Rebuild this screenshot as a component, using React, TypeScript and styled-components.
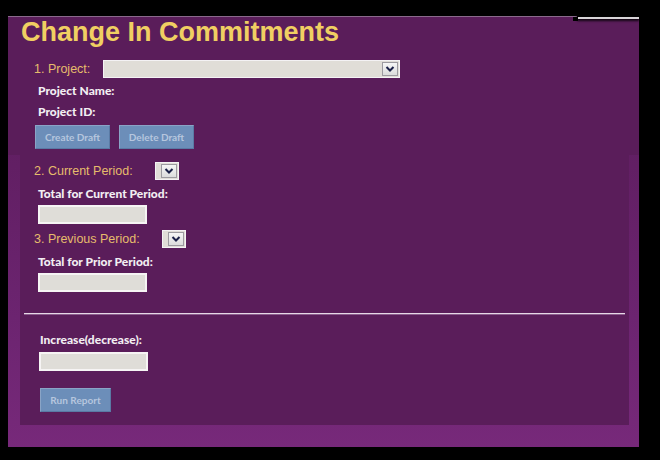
import styled, { createGlobalStyle } from "styled-components";

const GlobalStyle = createGlobalStyle`
  html, body {
    margin: 0;
    padding: 0;
    background: #000;
  }
`;

const Page = styled.div`
  width: 660px;
  height: 460px;
  box-sizing: border-box;
  padding: 16px 0 0 8px;
  background: #000;
  overflow: hidden;
`;

const Panel = styled.div`
  position: relative;
  width: 631px;
  height: 431px;
  box-sizing: border-box;
  border-top: 1px solid #8a6a8c;
  background: linear-gradient(#5c1e5c 0%, #621f64 35%, #6c2470 70%, #77297a 100%);
  display: flex;
  flex-direction: column;
`;

const CornerTab = styled.div`
  position: absolute;
  top: -17px;
  right: 0;
  width: 62px;
  height: 17px;
  background: #000;
  border-bottom: 2px solid #d8d4d8;
  box-shadow: 0 2px 2px rgba(0, 0, 0, 0.8);

  &::before {
    content: "";
    position: absolute;
    left: -4px;
    bottom: -4px;
    width: 5px;
    height: 4px;
    background: #000;
  }
`;

const Header = styled.div`
  background: #5a1d5a;
  height: 138px;
  display: flex;
  flex-direction: column;
`;

const Title = styled.h1`
  margin: 0 0 0 13px;
  font-family: "Liberation Sans", Arial, sans-serif;
  font-size: 27px;
  line-height: 30px;
  font-weight: bold;
  color: #f0cf62;
`;

const Row = styled.div<{ $top: number; $left: number }>`
  display: flex;
  align-items: center;
  height: 18px;
  margin-top: ${(p) => p.$top}px;
  padding-left: ${(p) => p.$left}px;
`;

const StepLabel = styled.span<{ $width: number }>`
  width: ${(p) => p.$width}px;
  flex: none;
  font-family: "Liberation Sans", Arial, sans-serif;
  font-size: 12.5px;
  color: #e6bc6c;
`;

const SelectBox = styled.div<{ $width: number }>`
  width: ${(p) => p.$width}px;
  height: 18px;
  box-sizing: border-box;
  border: 1px solid #f4f2f4;
  background: #e0ddd7;
  display: flex;
  justify-content: flex-end;
  padding: 1px;
`;

const ArrowBox = styled.div`
  width: 16px;
  height: 14px;
  box-sizing: border-box;
  border: 1px solid #9c9aa0;
  background: linear-gradient(#f6f6f6, #dcdcdc);
  display: flex;
  align-items: center;
  justify-content: center;
`;

const FieldLabel = styled.div<{ $top: number; $left: number }>`
  margin: ${(p) => p.$top}px 0 0 ${(p) => p.$left}px;
  height: 14px;
  line-height: 14px;
  font-family: Lato, "Open Sans", sans-serif;
  font-size: 12px;
  font-weight: 900;
  color: #f2eef2;
`;

const TextField = styled.div<{ $top: number; $left: number }>`
  margin: ${(p) => p.$top}px 0 0 ${(p) => p.$left}px;
  width: 109px;
  height: 19px;
  box-sizing: border-box;
  border: 2px solid #f6f4f4;
  background: #dfddd8;
`;

const ButtonRow = styled.div<{ $top: number; $left: number }>`
  display: flex;
  gap: 9px;
  margin: ${(p) => p.$top}px 0 0 ${(p) => p.$left}px;
`;

const Button = styled.button<{ $width: number }>`
  width: ${(p) => p.$width}px;
  height: 24px;
  padding: 0;
  border: 1px solid #8aa4c6;
  border-right-color: #5a7aa4;
  border-bottom-color: #5a7aa4;
  background: #6c8eb9;
  color: #b6c6de;
  font-family: Lato, "Open Sans", sans-serif;
  font-size: 10px;
  font-weight: bold;
`;

const Body = styled.div`
  margin: 0 10px 0 12px;
  height: 270px;
  box-sizing: border-box;
  padding-top: 7px;
  background: #5a1d5a;
  display: flex;
  flex-direction: column;
  align-items: flex-start;
`;

const Divider = styled.div`
  align-self: stretch;
  margin: 21px 4px 0;
  height: 1px;
  background: #e6d8e6;
  border-bottom: 1px solid #8c5e8e;
`;

const Chevron = () => (
  <svg width="10" height="8" viewBox="0 0 10 8">
    <path d="M1.5 2 L5 5.5 L8.5 2" fill="none" stroke="#1b2048" strokeWidth="2" />
  </svg>
);

export default function App() {
  return (
    <>
      <GlobalStyle />
      <Page>
        <Panel>
          <CornerTab />
          <Header>
            <Title>Change In Commitments</Title>
            <Row $top={13} $left={26}>
              <StepLabel $width={69}>1. Project:</StepLabel>
              <SelectBox $width={297}>
                <ArrowBox>
                  <Chevron />
                </ArrowBox>
              </SelectBox>
            </Row>
            <FieldLabel $top={6} $left={30}>Project Name:</FieldLabel>
            <FieldLabel $top={7} $left={30}>Project ID:</FieldLabel>
            <ButtonRow $top={6} $left={27}>
              <Button $width={75}>Create Draft</Button>
              <Button $width={75}>Delete Draft</Button>
            </ButtonRow>
          </Header>
          <Body>
            <Row $top={0} $left={14}>
              <StepLabel $width={121}>2. Current Period:</StepLabel>
              <SelectBox $width={24}>
                <ArrowBox>
                  <Chevron />
                </ArrowBox>
              </SelectBox>
            </Row>
            <FieldLabel $top={7} $left={18}>Total for Current Period:</FieldLabel>
            <TextField $top={4} $left={18} />
            <Row $top={6} $left={14}>
              <StepLabel $width={128}>3. Previous Period:</StepLabel>
              <SelectBox $width={24}>
                <ArrowBox>
                  <Chevron />
                </ArrowBox>
              </SelectBox>
            </Row>
            <FieldLabel $top={7} $left={18}>Total for Prior Period:</FieldLabel>
            <TextField $top={4} $left={18} />
            <Divider />
            <FieldLabel $top={18} $left={20}>Increase(decrease):</FieldLabel>
            <TextField $top={5} $left={19} />
            <ButtonRow $top={17} $left={20}>
              <Button $width={71}>Run Report</Button>
            </ButtonRow>
          </Body>
        </Panel>
      </Page>
    </>
  );
}
